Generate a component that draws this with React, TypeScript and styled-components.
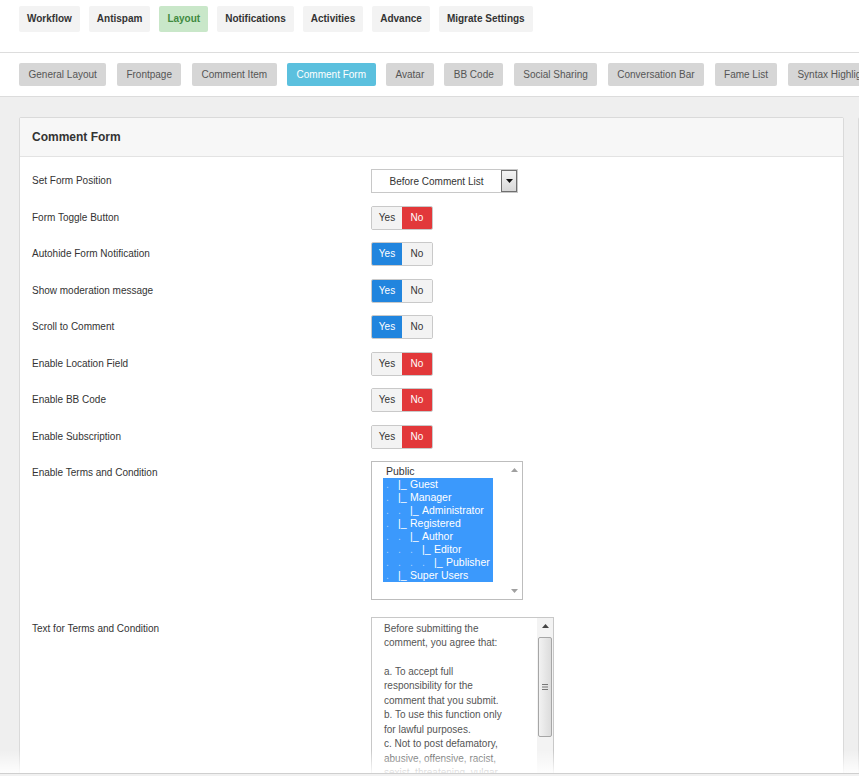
import React from 'react'
import styled, { createGlobalStyle, css } from 'styled-components'

const GlobalStyle = createGlobalStyle`
  html, body {
    margin: 0;
    padding: 0;
    overflow: hidden;
    background: #fff;
    font-family: 'Liberation Sans', Arial, sans-serif;
    font-size: 10px;
    color: #333;
  }
`

const Page = styled.div`
  width: 859px;
  height: 776px;
  overflow: hidden;
  position: relative;
`

const TopNav = styled.div`
  display: flex;
  gap: 9px;
  padding: 6px 19px 20px;
  border-bottom: 1px solid #ddd;
`

const TopTab = styled.div<{ $active?: boolean }>`
  height: 26px;
  line-height: 26px;
  padding: 0 8px;
  border-radius: 2px;
  font-weight: bold;
  font-size: 10px;
  background: ${(p) => (p.$active ? '#c9e7c9' : '#f3f3f3')};
  color: ${(p) => (p.$active ? '#3f8a3f' : '#333')};
`

const SubNav = styled.div`
  display: flex;
  gap: 10.5px;
  padding: 10px 19px;
  border-bottom: 1px solid #dcdcdc;
  white-space: nowrap;
  overflow: hidden;
`

const SubTab = styled.div<{ $active?: boolean }>`
  flex: none;
  height: 23px;
  line-height: 23px;
  padding: 0 9.5px;
  border-radius: 2px;
  font-size: 10px;
  background: ${(p) => (p.$active ? '#5bc0de' : '#d6d6d6')};
  color: ${(p) => (p.$active ? '#fff' : '#555')};
`

const Content = styled.div`
  background: #efefef;
  padding: 20px 0 0 19px;
  display: flex;
  gap: 14px;
  height: 700px;
`

const Panel = styled.div<{ $width: number }>`
  flex: none;
  width: ${(p) => p.$width}px;
  background: #fff;
  border: 1px solid #dadada;
  border-radius: 2px;
`

const PanelHeader = styled.div`
  height: 38px;
  line-height: 38px;
  padding: 0 12px;
  background: #f7f7f7;
  border-bottom: 1px solid #e3e3e3;
  font-size: 12px;
  font-weight: bold;
  color: #333;
`

const PanelBody = styled.div`
  display: flex;
  flex-direction: column;
  gap: 12.5px;
  padding: 12px 12px;
`

const Row = styled.div<{ $extraTop?: number }>`
  display: grid;
  grid-template-columns: 339px 1fr;
  align-items: start;
  margin-top: ${(p) => p.$extraTop || 0}px;
`

const Label = styled.div`
  line-height: 24px;
  font-size: 10px;
  color: #333;
`

const Select = styled.div`
  width: 147px;
  height: 24px;
  box-sizing: border-box;
  border: 1px solid #c8c8c8;
  display: flex;
  align-items: center;
  font-size: 10px;
  color: #333;
`

const SelectText = styled.div`
  flex: 1;
  text-align: center;
  padding-top: 1px;
`

const SelectButton = styled.div`
  width: 16px;
  height: 22px;
  box-sizing: border-box;
  border: 1px solid #6f6f6f;
  background: linear-gradient(to bottom, #f4f4f4, #d8d8d8);
  display: flex;
  align-items: center;
  justify-content: center;
`

const Toggle = styled.div`
  display: inline-flex;
  height: 24px;
  box-sizing: border-box;
  border: 1px solid #c9c9c9;
  border-radius: 2px;
  overflow: hidden;
`

const ToggleSeg = styled.div<{ $on?: 'yes' | 'no' }>`
  width: 30px;
  line-height: 22px;
  text-align: center;
  font-size: 10px;
  background: #f3f3f3;
  color: #333;
  ${(p) =>
    p.$on === 'yes' &&
    css`
      background: #2185de;
      color: #fff;
    `}
  ${(p) =>
    p.$on === 'no' &&
    css`
      background: #e2383a;
      color: #fff;
    `}
`

const ListBox = styled.div`
  width: 152px;
  height: 139px;
  box-sizing: border-box;
  border: 1px solid #bdbdbd;
  display: flex;
`

const ListItems = styled.div`
  flex: 1;
  padding: 3px 0 0 11px;
`

const ListGroup = styled.div`
  display: inline-block;
  font-size: 10.5px;
`

const Option = styled.div<{ $selected?: boolean }>`
  height: 13px;
  line-height: 13px;
  padding: 0 3px;
  white-space: nowrap;
  display: flex;
  background: ${(p) => (p.$selected ? '#3b99fc' : 'transparent')};
  color: ${(p) => (p.$selected ? '#fff' : '#333')};
`

const Dot = styled.span`
  display: inline-block;
  width: 12px;
  color: rgba(255, 255, 255, 0.55);
`

const Branch = styled.span`
  display: inline-block;
  width: 12px;
`

const ScrollTrack = styled.div<{ $bg?: string }>`
  flex: none;
  width: 16px;
  display: flex;
  flex-direction: column;
  align-items: center;
  background: ${(p) => p.$bg || '#fff'};
`

const ArrowBox = styled.div`
  height: 16px;
  width: 16px;
  display: flex;
  align-items: center;
  justify-content: center;
`

const Spacer = styled.div`
  flex: 1;
`

const Thumb = styled.div<{ $top: number; $height: number }>`
  margin-top: ${(p) => p.$top}px;
  width: 14px;
  height: ${(p) => p.$height}px;
  box-sizing: border-box;
  border: 1px solid #a6a6a6;
  border-radius: 2px;
  background: linear-gradient(to right, #f2f2f2, #dcdcdc);
  display: flex;
  align-items: center;
  justify-content: center;
`

const TextArea = styled.div`
  width: 183px;
  height: 240px;
  box-sizing: border-box;
  border: 1px solid #c8c8c8;
  display: flex;
`

const TextBody = styled.div`
  flex: 1;
  padding: 4px 0 0 12px;
  font-size: 10px;
  line-height: 14.45px;
  color: #555;
  white-space: pre-line;
`

const BottomFade = styled.div`
  position: absolute;
  left: 0;
  right: 0;
  bottom: 0;
  height: 26px;
  background: linear-gradient(to bottom, rgba(255, 255, 255, 0), rgba(255, 255, 255, 0.85) 22px);
  display: flex;
  flex-direction: column;
  justify-content: flex-end;
`

const BottomEdge = styled.div`
  height: 2px;
  border-top: 1px solid #cfcfcf;
  background: #f1f1f1;
`

const Arrow = ({ dir, color = '#999' }: { dir: 'up' | 'down'; color?: string }) => (
  <svg width="7" height="4" viewBox="0 0 7 4">
    <path d={dir === 'up' ? 'M0 4 L3.5 0 L7 4 Z' : 'M0 0 L3.5 4 L7 0 Z'} fill={color} />
  </svg>
)

const topTabs = ['Workflow', 'Antispam', 'Layout', 'Notifications', 'Activities', 'Advance', 'Migrate Settings']
const subTabs = [
  'General Layout',
  'Frontpage',
  'Comment Item',
  'Comment Form',
  'Avatar',
  'BB Code',
  'Social Sharing',
  'Conversation Bar',
  'Fame List',
  'Syntax Highlighter',
]

const toggles: [string, 'yes' | 'no'][] = [
  ['Form Toggle Button', 'no'],
  ['Autohide Form Notification', 'yes'],
  ['Show moderation message', 'yes'],
  ['Scroll to Comment', 'yes'],
  ['Enable Location Field', 'no'],
  ['Enable BB Code', 'no'],
  ['Enable Subscription', 'no'],
]

const groups: [number, string][] = [
  [1, 'Guest'],
  [1, 'Manager'],
  [2, 'Administrator'],
  [1, 'Registered'],
  [2, 'Author'],
  [3, 'Editor'],
  [4, 'Publisher'],
  [1, 'Super Users'],
]

const terms = `Before submitting the
comment, you agree that:

a. To accept full
responsibility for the
comment that you submit.
b. To use this function only
for lawful purposes.
c. Not to post defamatory,
abusive, offensive, racist,
sexist, threatening, vulgar,
obscene, hateful or otherwise
inappropriate comments.`

export default function App() {
  return (
    <Page>
      <GlobalStyle />
      <TopNav>
        {topTabs.map((t) => (
          <TopTab key={t} $active={t === 'Layout'}>
            {t}
          </TopTab>
        ))}
      </TopNav>
      <SubNav>
        {subTabs.map((t) => (
          <SubTab key={t} $active={t === 'Comment Form'}>
            {t}
          </SubTab>
        ))}
      </SubNav>
      <Content>
        <Panel $width={823}>
          <PanelHeader>Comment Form</PanelHeader>
          <PanelBody>
            <Row>
              <Label>Set Form Position</Label>
              <Select>
                <SelectText>Before Comment List</SelectText>
                <SelectButton>
                  <Arrow dir="down" color="#111" />
                </SelectButton>
              </Select>
            </Row>
            {toggles.map(([label, on]) => (
              <Row key={label}>
                <Label>{label}</Label>
                <div>
                  <Toggle>
                    <ToggleSeg $on={on === 'yes' ? 'yes' : undefined}>Yes</ToggleSeg>
                    <ToggleSeg $on={on === 'no' ? 'no' : undefined}>No</ToggleSeg>
                  </Toggle>
                </div>
              </Row>
            ))}
            <Row>
              <Label>Enable Terms and Condition</Label>
              <ListBox>
                <ListItems>
                  <ListGroup>
                    <Option>Public</Option>
                    {groups.map(([depth, name]) => (
                      <Option key={name} $selected>
                        {Array.from({ length: depth }).map((_, i) => (
                          <Dot key={i}>.</Dot>
                        ))}
                        <Branch>|_</Branch>
                        {name}
                      </Option>
                    ))}
                  </ListGroup>
                </ListItems>
                <ScrollTrack>
                  <ArrowBox>
                    <Arrow dir="up" color="#a0a0a0" />
                  </ArrowBox>
                  <Spacer />
                  <ArrowBox>
                    <Arrow dir="down" color="#a0a0a0" />
                  </ArrowBox>
                </ScrollTrack>
              </ListBox>
            </Row>
            <Row $extraTop={4}>
              <Label>Text for Terms and Condition</Label>
              <TextArea>
                <TextBody>{terms}</TextBody>
                <ScrollTrack $bg="#f3f3f3">
                  <ArrowBox>
                    <Arrow dir="up" color="#444" />
                  </ArrowBox>
                  <Thumb $top={3} $height={100}>
                    <svg width="6" height="6" viewBox="0 0 6 6">
                      <path d="M0 0.5 H6 M0 3 H6 M0 5.5 H6" stroke="#777" strokeWidth="1" />
                    </svg>
                  </Thumb>
                </ScrollTrack>
              </TextArea>
            </Row>
          </PanelBody>
        </Panel>
        <Panel $width={200} />
      </Content>
      <BottomFade>
        <BottomEdge />
      </BottomFade>
    </Page>
  )
}
